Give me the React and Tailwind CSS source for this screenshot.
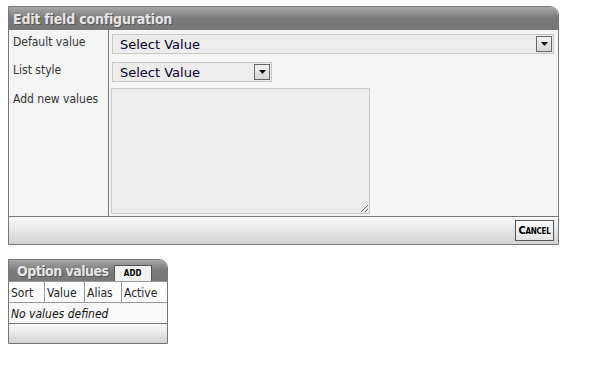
export default function App() {
  const font = { fontFamily: '"DejaVu Sans Condensed", "DejaVu Sans", sans-serif' };

  return (
    <div className="min-h-[368px] bg-white pt-[6px] pl-[8px]" style={font}>
      {/* Edit field configuration */}
      <div className="w-[551px] border border-[#777] rounded-tr-[9px] bg-[#f5f5f5]">
        <div className="h-[23px] rounded-tr-[8px] bg-gradient-to-b from-[#a8a8a8] via-[#7a7a7a] to-[#777] pl-[4px] flex items-center">
          <span className="text-[14px] font-bold text-[#e6e6e6] [text-shadow:1px_1px_0_#555] leading-none tracking-[-0.2px]">
            Edit field configuration
          </span>
        </div>
        <div className="flex">
          <div className="w-[100px] shrink-0 border-r border-[#777] text-[12px] text-[#333] pl-[4px]">
            <div className="h-[28px] pt-[3px]">Default value</div>
            <div className="h-[28px] pt-[3px]">List style</div>
            <div className="h-[130px] pt-[4px]">Add new values</div>
          </div>
          <div className="flex-1 pl-[3px] pr-[4px]">
            <div className="h-[28px] pt-[4px]">
              <Select className="w-[442px]" />
            </div>
            <div className="h-[28px] pt-[4px]">
              <Select className="w-[160px]" />
            </div>
            <div className="h-[130px] pt-[2px]">
              <textarea className="-ml-[1px] w-[259px] h-[126px] bg-[#ececec] border border-[#c8c8c8] resize outline-none" />
            </div>
          </div>
        </div>
        <div className="h-[28px] border-t border-[#777] bg-gradient-to-b from-[#fafafa] to-[#d2d2d2] flex items-center justify-end pr-[4px]">
          <button className="h-[21px] w-[39px] border border-[#555] bg-gradient-to-b from-[#fbfbfb] to-[#e4e4e4] text-[11px] font-bold text-black [font-variant:small-caps] leading-none tracking-[-0.3px]">
            Cancel
          </button>
        </div>
      </div>

      {/* Option values */}
      <div className="mt-[14px] w-[160px] border border-[#777] rounded-tr-[9px] bg-[#f5f5f5]">
        <div className="h-[21px] rounded-tr-[8px] bg-gradient-to-b from-[#a8a8a8] via-[#7a7a7a] to-[#777] pl-[8px] flex items-end">
          <span className="text-[14px] font-bold text-[#e6e6e6] [text-shadow:1px_1px_0_#555] leading-none mb-[3px] tracking-[-0.5px]">
            Option values
          </span>
          <button className="ml-[5px] w-[38px] h-[16px] bg-[#f2f2f2] border border-[#555] border-b-0 text-[8px] font-bold text-black leading-none">
            ADD
          </button>
        </div>
        <div className="flex h-[21px] border-t border-[#999] bg-white text-[12px] text-[#222]">
          <div className="w-[36px] border-r border-[#999] pl-[2px] pt-[2px]">Sort</div>
          <div className="w-[40px] border-r border-[#999] pl-[2px] pt-[2px]">Value</div>
          <div className="w-[37px] border-r border-[#999] pl-[2px] pt-[2px]">Alias</div>
          <div className="flex-1 pl-[2px] pt-[2px]">Active</div>
        </div>
        <div className="h-[21px] border-t border-[#999] bg-[#f8f8f8] pl-[2px] pt-[2px] text-[12px] italic text-[#111]">
          No values defined
        </div>
        <div className="h-[20px] border-t border-[#777] bg-gradient-to-b from-[#fafafa] to-[#d2d2d2]" />
      </div>
    </div>
  );
}

function Select({ className }) {
  return (
    <div className={`h-[20px] bg-[#ececec] border border-[#c8c8c8] flex items-center justify-between ${className}`}>
      <span className="pl-[7px] text-[13px] text-[#000033] leading-none" style={{ fontFamily: '"DejaVu Sans", sans-serif' }}>
        Select Value
      </span>
      <span className="w-[16px] h-[16px] mr-[1px] border border-[#666] bg-gradient-to-b from-[#f2f2f2] to-[#d8d8d8] flex items-center justify-center">
        <svg width="7" height="4" viewBox="0 0 7 4">
          <path d="M0 0h7L3.5 4z" fill="#000" />
        </svg>
      </span>
    </div>
  );
}
